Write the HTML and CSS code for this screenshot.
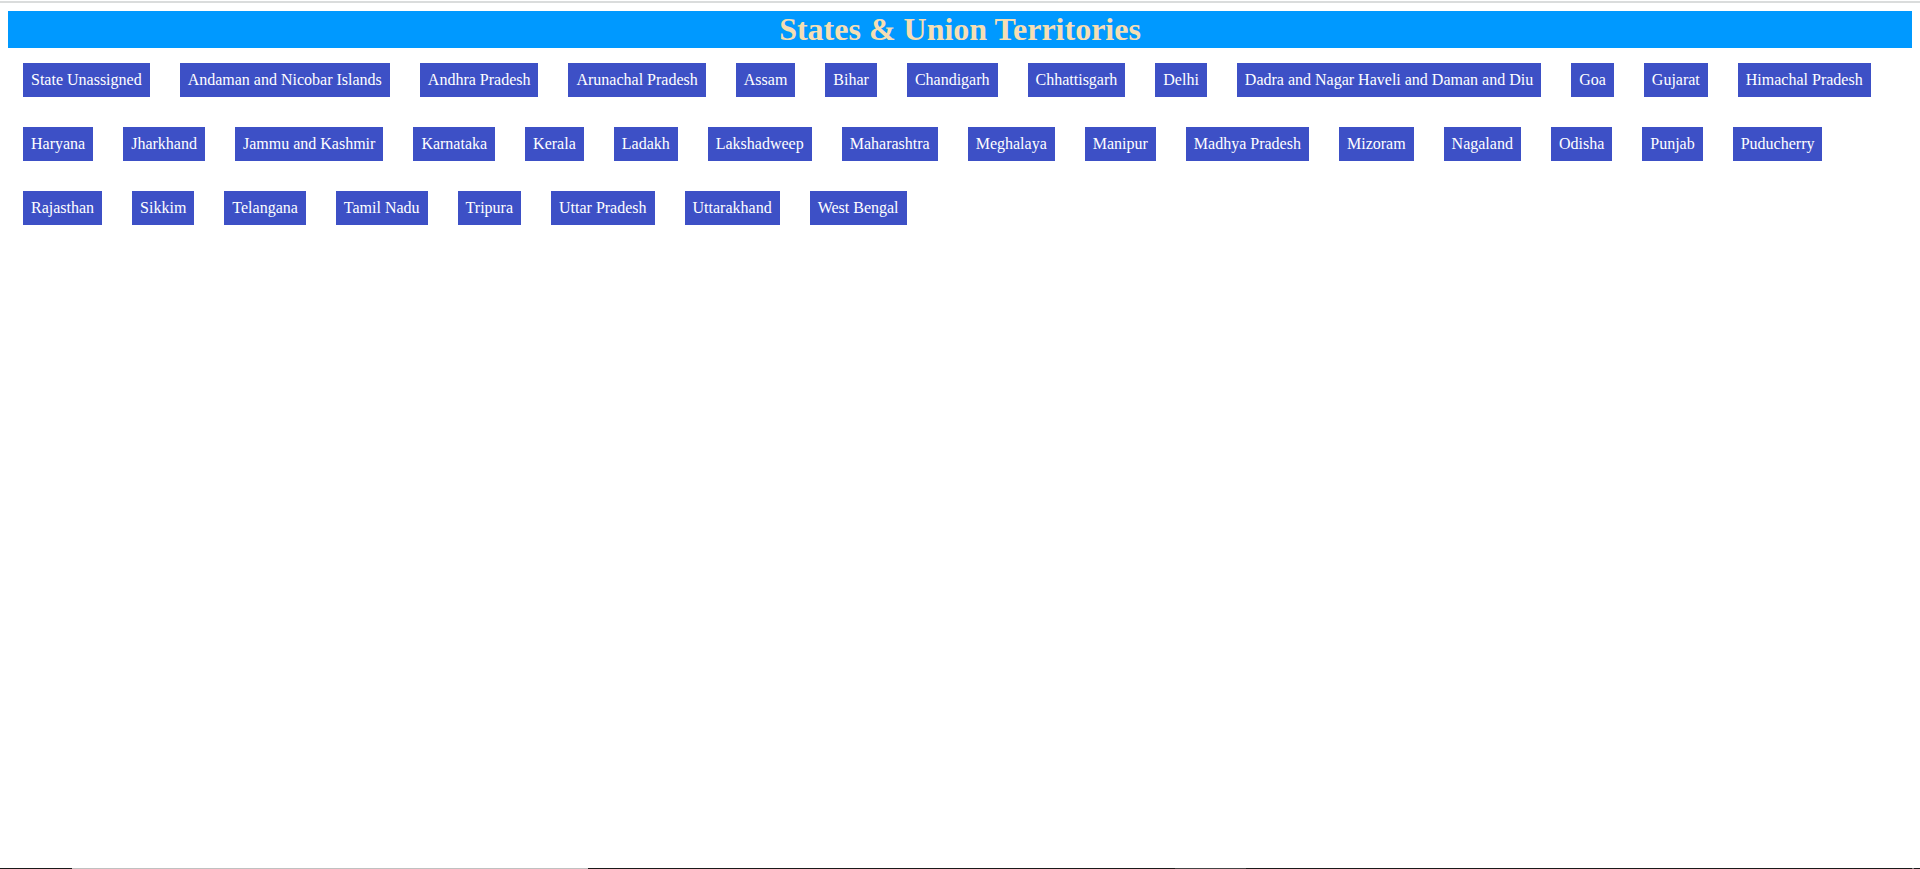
FILE: index.html
```html
<!DOCTYPE html>
<html lang="en">
<head>
<meta charset="utf-8">
<title>States &amp; Union Territories</title>
<link rel="stylesheet" href="styles.css">
</head>
<body>
<main class="page">
<h1 class="title">States &amp; Union Territories</h1>
<ul class="states">
<li><a class="state" href="#">State Unassigned</a></li>
<li><a class="state" href="#">Andaman and Nicobar Islands</a></li>
<li><a class="state" href="#">Andhra Pradesh</a></li>
<li><a class="state" href="#">Arunachal Pradesh</a></li>
<li><a class="state" href="#">Assam</a></li>
<li><a class="state" href="#">Bihar</a></li>
<li><a class="state" href="#">Chandigarh</a></li>
<li><a class="state" href="#">Chhattisgarh</a></li>
<li><a class="state" href="#">Delhi</a></li>
<li><a class="state" href="#">Dadra and Nagar Haveli and Daman and Diu</a></li>
<li><a class="state" href="#">Goa</a></li>
<li><a class="state" href="#">Gujarat</a></li>
<li><a class="state" href="#">Himachal Pradesh</a></li>
<li><a class="state" href="#">Haryana</a></li>
<li><a class="state" href="#">Jharkhand</a></li>
<li><a class="state" href="#">Jammu and Kashmir</a></li>
<li><a class="state" href="#">Karnataka</a></li>
<li><a class="state" href="#">Kerala</a></li>
<li><a class="state" href="#">Ladakh</a></li>
<li><a class="state" href="#">Lakshadweep</a></li>
<li><a class="state" href="#">Maharashtra</a></li>
<li><a class="state" href="#">Meghalaya</a></li>
<li><a class="state" href="#">Manipur</a></li>
<li><a class="state" href="#">Madhya Pradesh</a></li>
<li><a class="state" href="#">Mizoram</a></li>
<li><a class="state" href="#">Nagaland</a></li>
<li><a class="state" href="#">Odisha</a></li>
<li><a class="state" href="#">Punjab</a></li>
<li><a class="state" href="#">Puducherry</a></li>
<li><a class="state" href="#">Rajasthan</a></li>
<li><a class="state" href="#">Sikkim</a></li>
<li><a class="state" href="#">Telangana</a></li>
<li><a class="state" href="#">Tamil Nadu</a></li>
<li><a class="state" href="#">Tripura</a></li>
<li><a class="state" href="#">Uttar Pradesh</a></li>
<li><a class="state" href="#">Uttarakhand</a></li>
<li><a class="state" href="#">West Bengal</a></li>
</ul>
</main>
<div class="strip"><span class="strip-search"></span><span class="strip-active"></span><span class="strip-end"></span></div>
</body>
</html>
```

FILE: styles.css
```css
* {
  box-sizing: border-box;
}

body {
  margin: 0;
  padding-top: 1px;
  min-height: 100vh;
  display: flex;
  flex-direction: column;
  background: #fff;
  font-family: "Liberation Serif", "Times New Roman", serif;
  font-size: 16px;
}

.page {
  flex: 1;
  border-top: 2px solid #dadcdc;
  padding: 8px;
}

.title {
  margin: 0;
  background: #0099ff;
  color: wheat;
  font-size: 32px;
  line-height: 37px;
  text-align: center;
}

.states {
  display: flex;
  flex-wrap: wrap;
  gap: 30px;
  margin: 0;
  padding: 15px;
  list-style: none;
}

.state {
  display: block;
  padding: 8px;
  background: #3d50c6;
  color: #fff;
  line-height: 18px;
  text-decoration: none;
}

.strip {
  display: flex;
  height: 1px;
  background: #1a1a1a;
}

.strip-search {
  width: 516px;
  margin-left: 72px;
  background: #c0c0c0;
}

.strip-active {
  width: 71px;
  margin-left: 587px;
  background: #444;
}

.strip-end {
  width: 2px;
  margin-left: auto;
  margin-right: 6px;
  background: #777;
}
```
